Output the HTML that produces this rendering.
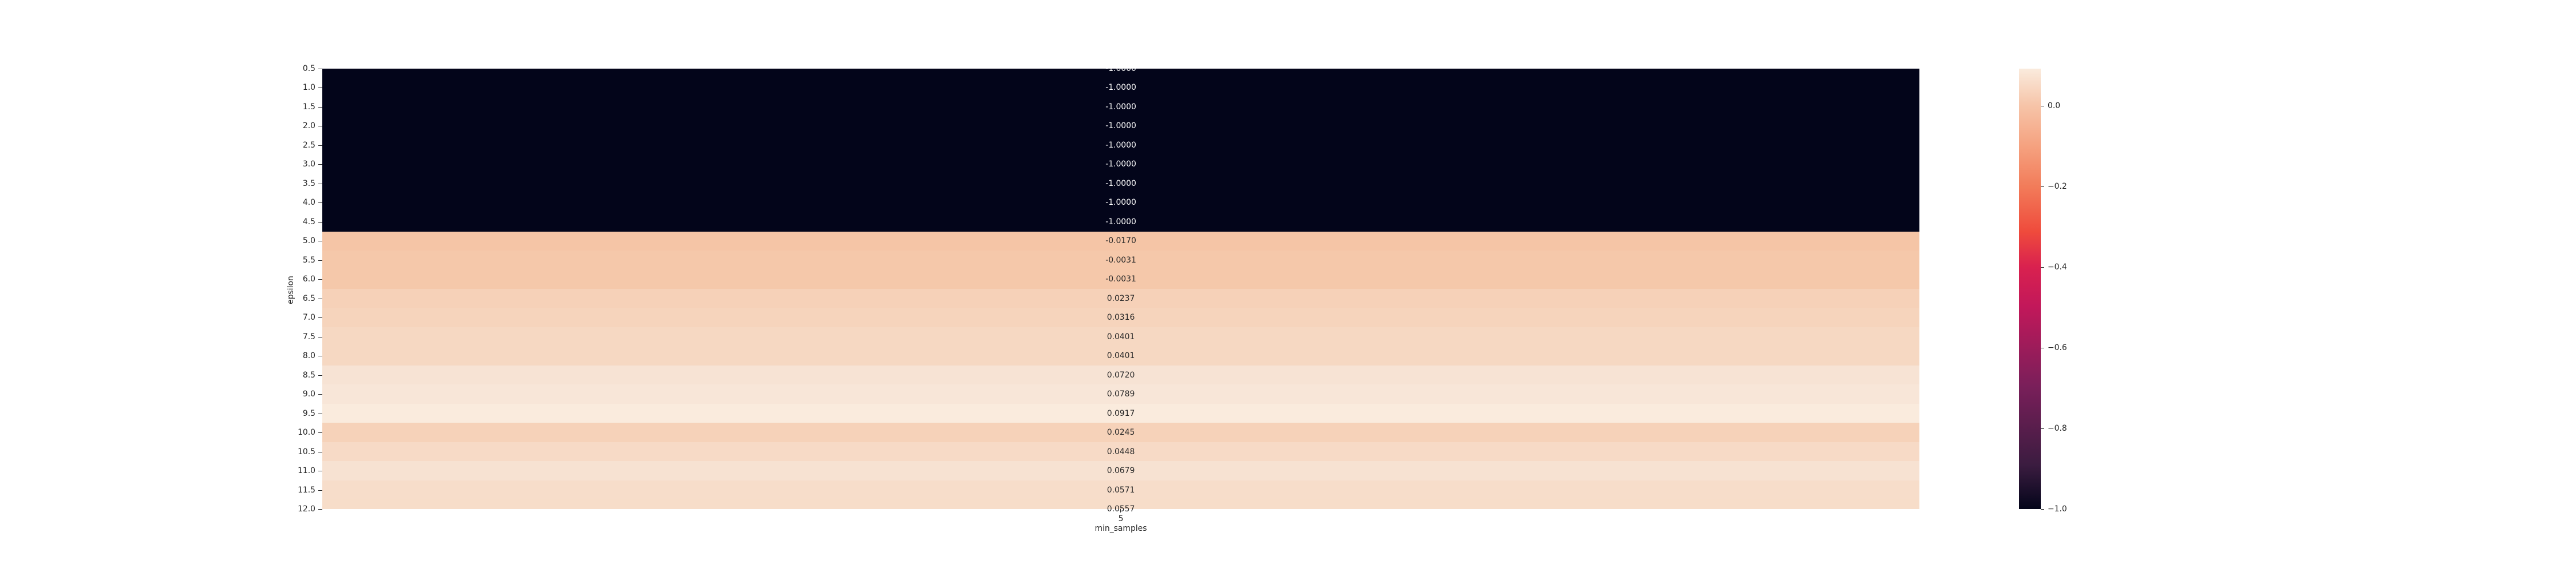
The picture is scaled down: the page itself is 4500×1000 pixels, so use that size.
<!DOCTYPE html>
<html><head><meta charset="utf-8">
<style>
html,body{margin:0;padding:0;background:#fff;}
body{width:4500px;height:1000px;position:relative;overflow:hidden;font-family:"DejaVu Sans","Liberation Sans",sans-serif;font-size:13.9px;color:#262626;}
.row{position:absolute;left:563px;width:2790px;}
.val{position:absolute;left:1858px;width:200px;text-align:center;line-height:16px;margin-top:-8px;}
.yl{position:absolute;right:3949px;text-align:right;line-height:16px;margin-top:-8px;}
.yt{position:absolute;left:556px;width:7px;height:1px;background:#262626;}
.cl{position:absolute;left:3577px;line-height:16px;margin-top:-8px;}
.ct{position:absolute;left:3565px;width:6px;height:1px;background:#262626;}
</style></head><body>
<div id="c"></div>
<div style="position:absolute;left:3527px;top:120px;width:38px;height:770px;background:linear-gradient(to bottom,#faebdd 0%,#f6c4a8 8.4%,#f5a07e 18%,#f27c5a 26.7%,#ef4b3c 37%,#d9214f 45%,#c2185a 54%,#7a1f5a 72%,#3b1c40 90%,#03051a 100%);"></div>
<div class="ct" style="top:185px"></div><div class="cl" style="top:185px">0.0</div>
<div class="ct" style="top:326px"></div><div class="cl" style="top:326px">−0.2</div>
<div class="ct" style="top:467px"></div><div class="cl" style="top:467px">−0.4</div>
<div class="ct" style="top:608px"></div><div class="cl" style="top:608px">−0.6</div>
<div class="ct" style="top:749px"></div><div class="cl" style="top:749px">−0.8</div>
<div class="ct" style="top:890px"></div><div class="cl" style="top:890px">−1.0</div>
<div style="position:absolute;left:1957px;top:890px;width:1px;height:6px;background:#262626"></div>
<div style="position:absolute;left:1858px;width:200px;text-align:center;top:899px;line-height:16px">5</div>
<div style="position:absolute;left:1858px;width:200px;text-align:center;top:916px;line-height:16px">min_samples</div>
<div style="position:absolute;left:468px;top:499px;width:80px;text-align:center;line-height:16px;transform:rotate(-90deg)">epsilon</div>
<script>
var vals=["-1.0000","-1.0000","-1.0000","-1.0000","-1.0000","-1.0000","-1.0000","-1.0000","-1.0000","-0.0170","-0.0031","-0.0031","0.0237","0.0316","0.0401","0.0401","0.0720","0.0789","0.0917","0.0245","0.0448","0.0679","0.0571","0.0557"];
var cols=["#03051a","#03051a","#03051a","#03051a","#03051a","#03051a","#03051a","#03051a","#03051a","#f5c5a6","#f5c8aa","#f5c8aa","#f6d1b8","#f6d4bc","#f6d8c2","#f6d8c2","#f7e3d4","#f8e6d8","#faebdd","#f6d2b9","#f7dac6","#f7e2d2","#f7ddca","#f7ddc9"];
var h='',s=770/23;
for(var i=0;i<24;i++){
 var c=120+s*i,t=Math.max(120,c-s/2),b=Math.min(890,c+s/2);
 h+='<div class="row" style="top:'+t+'px;height:'+(b-t)+'px;background:'+cols[i]+'"></div>';
}
for(var i=0;i<24;i++){
 var c=120+s*i;
 h+='<div class="val" style="top:'+c+'px;color:'+(i<9?'#fff':'#262626')+'">'+vals[i]+'</div>';
 h+='<div class="yt" style="top:'+Math.round(c)+'px"></div>';
 h+='<div class="yl" style="top:'+c+'px">'+(0.5*(i+1)).toFixed(1)+'</div>';
}
document.getElementById('c').innerHTML=h;
</script>
</body></html>
